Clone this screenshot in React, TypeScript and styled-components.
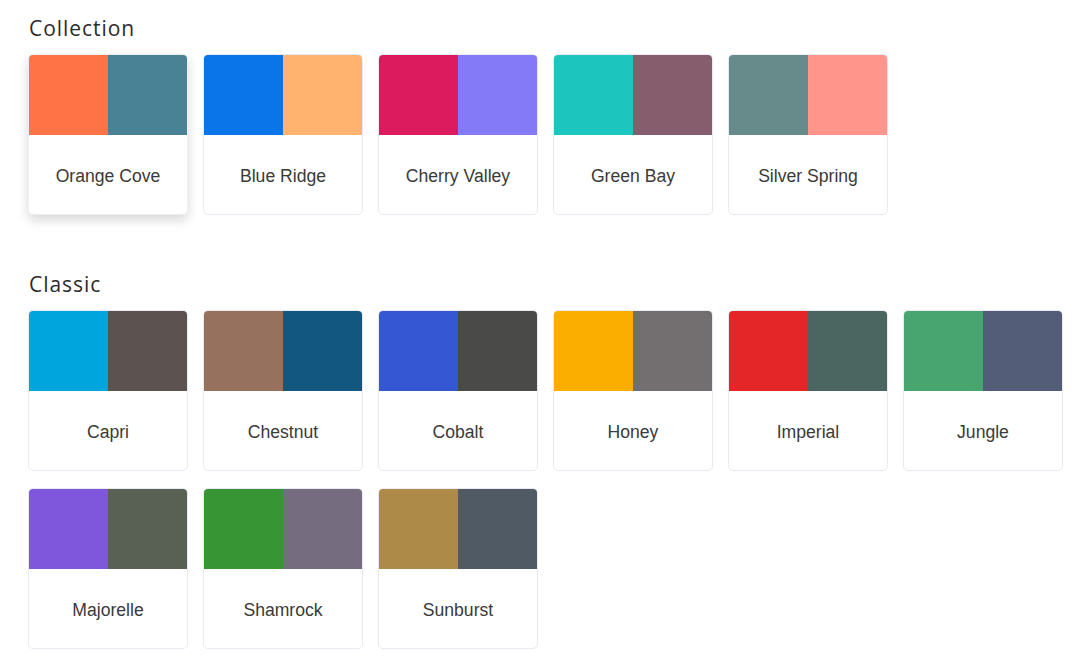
import styled, { createGlobalStyle } from "styled-components";

const GlobalStyle = createGlobalStyle`
  body {
    margin: 0;
    background: #ffffff;
  }
`;

const Page = styled.div`
  padding: 16px 28px 0 28px;
`;

const Section = styled.section<{ $first?: boolean }>`
  margin-top: ${(p) => (p.$first ? "0" : "57px")};
`;

const Title = styled.h2`
  margin: 0 0 14px 1px;
  font-family: "Open Sans", "Noto Sans", sans-serif;
  font-weight: 400;
  font-size: 21px;
  line-height: 24px;
  letter-spacing: 0.95px;
  color: #2b2b2b;
`;

const Grid = styled.div`
  display: grid;
  grid-template-columns: repeat(6, 160px);
  column-gap: 15px;
  row-gap: 17px;
`;

const Card = styled.div<{ $active?: boolean }>`
  width: 160px;
  box-sizing: border-box;
  border: 1px solid ${(p) => (p.$active ? "#eeeeee" : "#e9e9f1")};
  border-radius: 5px;
  overflow: hidden;
  background: #ffffff;
  box-shadow: ${(p) => (p.$active ? "0 5px 12px rgba(0, 0, 0, 0.16)" : "none")};
  cursor: pointer;
`;

const Swatches = styled.div`
  display: flex;
  height: 80px;
`;

const Swatch = styled.div<{ $color: string }>`
  flex: 1;
  background-color: ${(p) => p.$color};
`;

const Label = styled.div`
  height: 79px;
  box-sizing: border-box;
  padding-top: 3px;
  display: flex;
  align-items: center;
  justify-content: center;
  font-family: "Liberation Sans", Arial, sans-serif;
  font-size: 17.6px;
  color: #3a3a3a;
`;

type Theme = { name: string; colors: [string, string] };

const collection: Theme[] = [
  { name: "Orange Cove", colors: ["#ff7347", "#4a8295"] },
  { name: "Blue Ridge", colors: ["#0a74e9", "#ffb36f"] },
  { name: "Cherry Valley", colors: ["#dc1b5e", "#8479f7"] },
  { name: "Green Bay", colors: ["#1dc5bf", "#855d6c"] },
  { name: "Silver Spring", colors: ["#678a8a", "#ff958b"] },
];

const classic: Theme[] = [
  { name: "Capri", colors: ["#00a5de", "#5c5351"] },
  { name: "Chestnut", colors: ["#96715e", "#12577f"] },
  { name: "Cobalt", colors: ["#3657d3", "#4a4b48"] },
  { name: "Honey", colors: ["#fbae00", "#736e70"] },
  { name: "Imperial", colors: ["#e52628", "#4b6661"] },
  { name: "Jungle", colors: ["#48a570", "#535d77"] },
  { name: "Majorelle", colors: ["#7e57dc", "#586153"] },
  { name: "Shamrock", colors: ["#389533", "#756c7f"] },
  { name: "Sunburst", colors: ["#ae8a48", "#505a65"] },
];

function ThemeCard({ theme, active }: { theme: Theme; active?: boolean }) {
  return (
    <Card $active={active}>
      <Swatches>
        <Swatch $color={theme.colors[0]} />
        <Swatch $color={theme.colors[1]} />
      </Swatches>
      <Label>{theme.name}</Label>
    </Card>
  );
}

export default function App() {
  return (
    <>
      <GlobalStyle />
      <Page>
        <Section $first>
          <Title>Collection</Title>
          <Grid>
            {collection.map((t, i) => (
              <ThemeCard key={t.name} theme={t} active={i === 0} />
            ))}
          </Grid>
        </Section>
        <Section>
          <Title>Classic</Title>
          <Grid>
            {classic.map((t) => (
              <ThemeCard key={t.name} theme={t} />
            ))}
          </Grid>
        </Section>
      </Page>
    </>
  );
}
